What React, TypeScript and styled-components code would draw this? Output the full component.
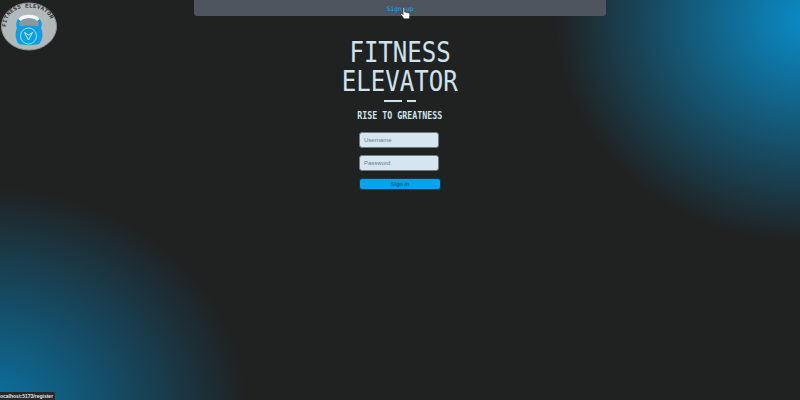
import styled, { createGlobalStyle } from "styled-components";

const Global = createGlobalStyle`
  html, body { margin: 0; padding: 0; height: 100%; }
  body { background: #202222; overflow: hidden; }
`;

export default function App() {
  return (
    <>
      <Global />
      <Page>
        <Logo viewBox="0 0 58 52" aria-label="Fitness Elevator logo">
          <defs>
            <path id="logo-arc" d="M6 27 C6 13 17 7.5 29 7.5 C41 7.5 52 13 52 27" />
          </defs>
          <ellipse cx="29" cy="26.5" rx="27.5" ry="23.5" fill="#b3b9bb" stroke="#8f9597" />
          <text fontFamily="Liberation Mono, monospace" fontSize="5.8" fontWeight="700" fill="#2a2d2f">
            <textPath href="#logo-arc" textLength="60" lengthAdjust="spacing">FITNESS  ELEVATOR</textPath>
          </text>
          <path d="M18.5 28 C15.5 20 20 15.5 29 15.5 C38 15.5 42.5 20 39.5 28" fill="#8f979b" />
          <path d="M18.5 28 C16 21 20 17 29 17 C38 17 42 21 39.5 28" fill="none" stroke="#0c9fe3" strokeWidth="3" />
          <path d="M19.5 20 C21.5 17.5 25 16.5 29 16.5 C33 16.5 36.5 17.5 38.5 20" fill="none" stroke="#f4f7f8" strokeWidth="3.4" />
          <path d="M17.5 27 C22 25 36 25 40.5 27 C43.5 32 43 39.5 39 44 C34 45.5 24 45.5 19 44 C15 39.5 14.5 32 17.5 27 Z" fill="#0c9fe3" />
          <circle cx="28.5" cy="36" r="8" fill="none" stroke="#d7eefa" strokeWidth="0.8" />
          <path d="M24.5 32.5 L28.5 40 L32.5 32.5 L28.5 35 Z" fill="none" stroke="#e8f6fd" strokeWidth="0.9" />
        </Logo>

        <TopBar>
          <SignUp href="#register">Sign up</SignUp>
          <HandCursor viewBox="0 0 12 14">
            <path
              d="M3.4 1.2 C3.4 .3 5 .3 5 1.2 V5.4 L9.6 6.4 C10.6 6.7 10.9 7.4 10.7 8.3 L10 12.8 H4.4 L1.2 8.4 C.7 7.5 1.7 6.8 2.4 7.4 L3.4 8.4 Z"
              fill="#fff"
              stroke="#222"
              strokeWidth="0.5"
            />
          </HandCursor>
        </TopBar>

        <Main>
          <Title>
            <TitleLine>FITNESS</TitleLine>
            <TitleLine>ELEVATOR</TitleLine>
          </Title>
          <Dashes>
            <Dash $width={18} />
            <Dash $width={9} />
          </Dashes>
          <Tagline>RISE TO GREATNESS</Tagline>
          <Form>
            <Field placeholder="Username" />
            <Field placeholder="Password" type="password" />
            <SignIn type="button">Sign in</SignIn>
          </Form>
        </Main>

        <StatusBar>ocalhost:5173/register</StatusBar>
      </Page>
    </>
  );
}

const Page = styled.div`
  position: relative;
  width: 800px;
  height: 400px;
  overflow: hidden;
  display: flex;
  flex-direction: column;
  align-items: center;
  background:
    radial-gradient(ellipse 252px 222px at 808px 20px, #0a8cc8 0%, rgba(10, 140, 200, 0) 100%),
    radial-gradient(ellipse 262px 228px at -15px 415px, #0a76a8 0%, rgba(10, 118, 168, 0) 100%),
    #202222;
`;

const Logo = styled.svg`
  position: absolute;
  left: 0;
  top: 0;
  width: 58px;
  height: 52px;
`;

const TopBar = styled.nav`
  position: relative;
  width: 412px;
  height: 16px;
  flex: none;
  display: flex;
  justify-content: center;
  align-items: center;
  background: #4f555f;
  border-radius: 0 0 3px 3px;
`;

const SignUp = styled.a`
  padding-top: 1px;
  font-family: "DejaVu Sans Mono", monospace;
  font-size: 6.3px;
  color: #0cabf4;
  text-decoration: none;
`;

const HandCursor = styled.svg`
  position: absolute;
  left: 206px;
  top: 7px;
  width: 11px;
  height: 13px;
`;

const Main = styled.main`
  display: flex;
  flex-direction: column;
  align-items: center;
  padding-top: 22px;
`;

const Title = styled.h1`
  margin: 0;
  display: flex;
  flex-direction: column;
  align-items: center;
  font-family: "DejaVu Sans Mono", monospace;
  font-size: 29px;
  font-weight: 400;
  line-height: 29px;
  color: #d0e2ec;
`;

const TitleLine = styled.span`
  display: block;
  transform: scaleX(0.83);
`;

const Dashes = styled.div`
  display: flex;
  gap: 5px;
  margin-top: 4px;
`;

const Dash = styled.span<{ $width: number }>`
  width: ${(p) => p.$width}px;
  height: 2px;
  background: #d0e2ec;
`;

const Tagline = styled.h2`
  margin: 6px 0 0;
  font-family: "DejaVu Sans Mono", monospace;
  font-size: 10.5px;
  font-weight: 700;
  line-height: 14px;
  color: #d0e2ec;
  transform: scaleX(0.79);
  white-space: nowrap;
`;

const Form = styled.form`
  display: flex;
  flex-direction: column;
  align-items: flex-start;
  gap: 7px;
  margin-top: 10px;
`;

const Field = styled.input`
  box-sizing: border-box;
  width: 80px;
  height: 16px;
  padding: 0 4px;
  background: #d5e6f1;
  border: 1px solid #6f7a82;
  border-radius: 3px;
  font-family: "Liberation Sans", sans-serif;
  font-size: 6px;
  outline: none;

  &::placeholder {
    color: #6d7c86;
    opacity: 1;
  }
`;

const SignIn = styled.button`
  box-sizing: border-box;
  width: 82px;
  height: 12px;
  padding: 0;
  background: #01a3ec;
  border: 1px solid #14384b;
  border-radius: 3px;
  font-family: "Liberation Sans", sans-serif;
  font-size: 6px;
  color: #123a50;
`;

const StatusBar = styled.div`
  position: absolute;
  left: 0;
  bottom: 0;
  height: 8px;
  padding: 0 2px 0 0;
  display: flex;
  align-items: center;
  background: #26282a;
  border-radius: 0 2px 0 0;
  font-family: "Liberation Sans", sans-serif;
  font-size: 5px;
  font-weight: 700;
  color: #e3e5e7;
  white-space: nowrap;
`;
